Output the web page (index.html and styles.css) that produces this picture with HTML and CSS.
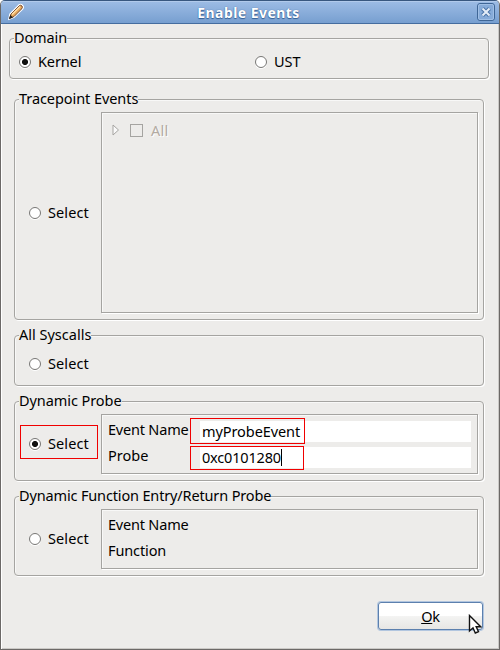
FILE: index.html
```html
<!DOCTYPE html>
<html lang="en">
<head>
<meta charset="utf-8">
<title>Enable Events</title>
<link rel="stylesheet" href="styles.css">
</head>
<body>
<main class="window">
  <header class="titlebar">
    <svg class="pencil" width="18" height="18" viewBox="0 0 18 18">
      <path d="M2 16L3 11L12 2Q14 1 15.500 2.500Q17 4 15.500 6L7 14Z" fill="#fff" stroke="#fff" stroke-width="1.500"/>
      <path d="M2.500 15.500L4 11L12 3Q13.500 1.500 15 3Q16 4.500 14.500 6L7 13.500Z" fill="#e9a95c" stroke="#70452d"/>
      <path d="M5 11.500L13 3.500" stroke="#ffe3ad" stroke-width="1.500"/>
      <path d="M2 16L3.400 12L6 14.500Z" fill="#222"/>
    </svg>
    <h1 class="title">Enable Events</h1>
    <svg class="close" width="18" height="18" viewBox="0 0 18 18">
      <rect x=".5" y=".5" width="17" height="17" rx="2.500" fill="#86abd9" stroke="#3f6696"/>
      <rect x="1.500" y="1.500" width="15" height="15" rx="1.500" fill="none" stroke="#a0bfe5"/>
      <path d="M5.500 5.500L12.500 12.500M12.500 5.500L5.500 12.500" stroke="#4b74a8" stroke-width="4"/>
      <path d="M5.500 5.500L12.500 12.500M12.500 5.500L5.500 12.500" stroke="#e4edf8" stroke-width="2"/>
    </svg>
  </header>
  <div class="content">
    <section class="group domain">
      <h2 class="legend"><span class="t-tight">Domain</span></h2>
      <div class="options">
        <label class="option"><i class="radio on"></i><span class="t-tight">Kernel</span></label>
        <label class="option"><i class="radio"></i><span>UST</span></label>
      </div>
    </section>
    <section class="group tracepoints">
      <h2 class="legend"><span class="t-trace">Tracepoint Events</span></h2>
      <div class="row">
        <label class="option"><i class="radio"></i><span class="t-select">Select</span></label>
        <div class="panel tree">
          <svg width="8" height="12" viewBox="0 0 8 12"><path d="M1 1L6.500 6L1 11Z" fill="#fafafa" stroke="#a5a4a1"/></svg>
          <i class="checkbox"></i><span class="t-all">All</span>
        </div>
      </div>
    </section>
    <section class="group syscalls">
      <h2 class="legend"><span>All Syscalls</span></h2>
      <div class="row">
        <label class="option"><i class="radio"></i><span class="t-select">Select</span></label>
      </div>
    </section>
    <section class="group probe">
      <h2 class="legend"><span class="t-trace">Dynamic Probe</span></h2>
      <div class="row">
        <label class="option marked"><i class="radio on"></i><span class="t-select">Select</span></label>
        <div class="panel form">
          <span class="t-event">Event Name</span>
          <div class="field mark-name"><span class="t-value">myProbeEvent</span></div>
          <span>Probe</span>
          <div class="field mark-address"><span class="t-address">0xc0101280</span><i class="caret"></i></div>
        </div>
      </div>
    </section>
    <section class="group probe">
      <h2 class="legend"><span class="t-function-group">Dynamic Function Entry/Return Probe</span></h2>
      <div class="row">
        <label class="option"><i class="radio"></i><span class="t-select">Select</span></label>
        <div class="panel form">
          <span class="t-event">Event Name</span><span></span>
          <span class="t-tight">Function</span><span></span>
        </div>
      </div>
    </section>
    <button class="ok"><span><u>O</u>k</span>
      <svg class="cursor" width="14" height="22" viewBox="0 0 14 22"><path d="M1.500 1.500V17L5 13.800L7.300 19L10.500 17.600L8.200 12.800H12.700Z" fill="#fff" stroke="#111" stroke-width="1.400"/></svg>
    </button>
  </div>
</main>
</body>
</html>
```
FILE: styles.css
```css
*, *::after { box-sizing: border-box; }
body {
  margin: 0;
  background: #fff;
  color: #000;
  font: 14.5px/20px "Noto Sans", "Open Sans", sans-serif;
}
.window {
  width: 500px;
  height: 650px;
  border: 1px solid #6c6967;
  border-top-color: #38577f;
  border-radius: 5px 5px 0 0;
  background: #edecea;
  box-shadow: inset 1px 0 #fff, inset -1px -1px #cbc9c6;
  overflow: hidden;
}
.titlebar {
  height: 23px;
  display: flex;
  justify-content: space-between;
  padding: 2px 4px 0 6px;
  background: linear-gradient(#9dbce5, #779fd0);
  border-bottom: 1px solid #456d9f;
  box-shadow: inset 0 1px #b1caeb;
}
.title {
  margin: 0 5px 0 0;
  font-size: 14px;
  line-height: 19px;
  color: #fff;
  text-shadow: 0 0 1px #355f94, 0 1px 1px #355f94;
  letter-spacing: .45px;
}
.content { padding: 14px 15px 0 13px; }
.group {
  border: 1px solid #a5a4a1;
  border-radius: 4px;
  box-shadow: 1px 1px #fff, inset 1px 1px #f8f8f7;
  margin-bottom: 15px;
}
.domain { height: 41px; margin: 0 -5px 20px; }
.tracepoints { height: 221px; }
.syscalls { height: 51px; }
.probe { height: 80px; }
.legend {
  margin: -11px 0 0 4px;
  width: fit-content;
  height: 20px;
  line-height: 18px;
  font-size: inherit;
  font-weight: normal;
  background: #edecea;
}
span { white-space: nowrap; }
.t-tight { letter-spacing: -.12px; }
.t-trace { letter-spacing: -.07px; }
.t-select { letter-spacing: .1px; }
.t-all { letter-spacing: .3px; }
.t-event { letter-spacing: -.2px; }
.t-value { letter-spacing: -.08px; }
.t-address { letter-spacing: -.17px; }
.t-function-group { letter-spacing: -.15px; }
.options { display: grid; grid-template-columns: 236px 1fr; height: 28px; padding-left: 9px; }
.option { display: flex; align-items: center; gap: 7px; }
.option span { padding-bottom: 2px; }
.radio {
  width: 12px;
  height: 12px;
  border: 1px solid #777674;
  border-radius: 50%;
  background: #fff;
  box-shadow: 0 1px #fff;
}
.radio.on { background: radial-gradient(circle at center, #111 0 2.6px, #fff 3.5px); }
.row { display: flex; padding: 3px 5px 0 14px; }
.row > .option { width: 72px; }
.syscalls .row { height: 38px; padding-top: 0; }
.panel {
  flex: 1;
  border: 1px solid #a5a4a1;
  box-shadow: 1px 1px #fff, inset 1px 1px #f8f8f7;
}
.tree {
  height: 201px;
  display: flex;
  align-items: flex-start;
  padding: 8px 10px;
  color: #b3aaa2;
  line-height: 18px;
  text-shadow: 1px 1px #fff;
}
.tree svg { margin: 3px 10px 0 0; }
.checkbox { width: 13px; height: 13px; margin: 3px 8px 0 0; border: 1px solid #a5a4a1; }
.form {
  height: 60px;
  display: grid;
  grid-template-columns: 92px 1fr;
  grid-template-rows: 21px 21px;
  row-gap: 5px;
  padding: 6px 6px 0 6px;
}
.form > span { line-height: 16px; }
.field { position: relative; background: #fff; padding-left: 2px; display: flex; line-height: 20px; }
.caret { width: 1px; height: 17px; margin-top: 2px; background: #000; }
.marked { position: relative; }
.marked::after, .mark-name::after, .mark-address::after {
  content: "";
  position: absolute;
  border: 1px solid #f00000;
}
.marked::after { left: -9px; top: 11px; width: 78px; height: 34px; }
.mark-name::after { left: -10px; top: -3px; width: 115px; height: 26px; }
.mark-address::after { left: -10px; top: -1px; width: 114px; height: 24px; }
.ok {
  position: relative;
  display: block;
  width: 105px;
  height: 28px;
  margin: 26px 1px 0 auto;
  border: 1px solid #5c80ae;
  border-radius: 3px;
  background: linear-gradient(#fff 0 48%, #f3f3f2 52%, #e7e6e4);
  box-shadow: 0 0 0 1px #b2c6df;
  color: #000;
  font: inherit;
  letter-spacing: -.2px;
  padding: 0;
}
.cursor { position: absolute; left: 89px; top: 11px; }
```
